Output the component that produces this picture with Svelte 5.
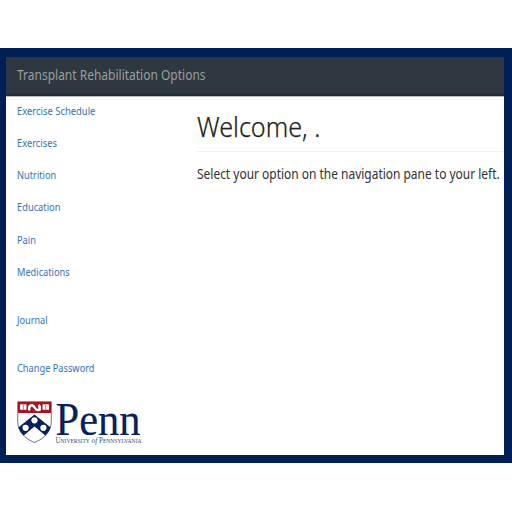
<script>
  const links = [
    { label: 'Exercise Schedule', sx: 0.856 },
    { label: 'Exercises', sx: 0.848 },
    { label: 'Nutrition', sx: 0.84 },
    { label: 'Education', sx: 0.845 },
    { label: 'Pain', sx: 0.84 },
    { label: 'Medications', sx: 0.84 },
    { label: 'Journal', sx: 0.83, gap: true },
    { label: 'Change Password', sx: 0.84, gap: true },
  ];
</script>

<div class="page">
  <div class="frame">
    <header><span class="fit brand">Transplant Rehabilitation Options</span></header>
    <div class="body">
      <aside>
        <nav>
          {#each links as l}
            <a href="#top" class:gap={l.gap}><span class="fit" style="transform: scaleX({l.sx})">{l.label}</span></a>
          {/each}
        </nav>
        <svg class="logo" width="128" height="46" viewBox="0 0 128 46" role="img" aria-label="Penn">
          <path d="M.7.7H34.3V20C34.3 31 27 37.5 17.5 41.6C8 37.5.7 31 .7 20Z" fill="#fff" stroke="#56678f" stroke-width=".9" />
          <path d="M1 1H34V12H1Z" fill="#a41424" />
          <g fill="#fff">
            <path d="M3 3.600q2-.8 3.300 0q1.500-.8 3.200 0V8.800H3ZM25.500 3.600q1.700-.8 3.200 0q1.500-.8 3.300 0V8.800h-6.500Z" />
            <path d="M11 9.500V5.500q1.500-3.300 4.300-2.400q2.700.8 3.500 3.100q1.200 2.400 2.500 1l-.4-2.800l1.500-1.500l1.500 2v4.700l-2 .7q-3.500.2-4.800-2.500q-1.300-2.500-2.800-2.100q-1.300.5-1 3.800Z" />
          </g>
          <path d="M6.300 4V8.500M28.700 4V8.500" stroke="#a41424" stroke-width=".6" />
          <path d="M17.500 13.500L33.700 26.500Q31.500 32 28.300 34.500L17.500 25.500L6.700 34.500Q3.500 32 1.300 26.500Z" fill="#08215a" />
          <circle cx="17.500" cy="19.300" r="3.100" fill="#fff" />
          <circle cx="8.600" cy="26.800" r="3.100" fill="#fff" />
          <circle cx="26.400" cy="26.800" r="3.100" fill="#fff" />
          <text x="38.500" y="34" textLength="85" lengthAdjust="spacingAndGlyphs" class="penn">Penn</text>
          <text x="38.500" y="42" textLength="86" lengthAdjust="spacingAndGlyphs" class="sub">U<tspan class="sc">NIVERSITY</tspan> <tspan class="of">of</tspan> P<tspan class="sc">ENNSYLVANIA</tspan></text>
        </svg>
      </aside>
      <main>
        <h1><span class="fit title">Welcome, .</span></h1>
        <p><span class="fit copy">Select your option on the navigation pane to your left.</span></p>
      </main>
    </div>
  </div>
</div>

<style>
  .page {
    box-sizing: border-box;
    width: 512px;
    height: 512px;
    padding-top: 48px;
    background: #fff;
    overflow: hidden;
    font-family: "Noto Sans", "Open Sans", sans-serif;
  }
  .frame {
    box-sizing: border-box;
    height: 415px;
    border: solid #001f57;
    border-width: 9px 8px 8px 6px;
    background: #fff;
  }
  header {
    box-sizing: border-box;
    height: 40px;
    padding-left: 10.500px;
    line-height: 35px;
    background: linear-gradient(#2e3840 0 37px, #222c34 37px 39px, #b5babd 39px);
  }
  .fit {
    display: inline-block;
    white-space: nowrap;
    transform-origin: 0 50%;
  }
  .brand { font-size: 14.500px; color: #9b9d9e; transform: scaleX(.827); }
  .body { display: flex; height: 358px; }
  aside { width: 180.500px; padding-left: 10.500px; box-sizing: content-box; flex: none; }
  nav { height: 304px; }
  a {
    display: block;
    height: 32.150px;
    line-height: 27px;
    font-size: 11px;
    color: #3272b4;
    text-decoration: none;
  }
  .gap { margin-top: 16px; }
  .logo { display: block; overflow: visible; }
  .penn { font-family: "Liberation Serif", serif; font-size: 46.500px; fill: #08215a; stroke: #08215a; stroke-width: .2; }
  .sub { font-family: "Liberation Serif", serif; font-size: 7.500px; fill: #3c4c78; }
  .sc { font-size: 6px; }
  .of { font-size: 8px; font-style: italic; }
  main { width: 307px; flex: none; }
  h1 {
    margin: 0;
    height: 54px;
    line-height: 55px;
    border-bottom: 1px solid #eee;
    font-weight: 400;
  }
  .title { font-size: 27.500px; color: #222; font-weight: 300; -webkit-text-stroke: .25px #222; transform: scaleX(.915); }
  p { margin: 0; line-height: 43px; }
  .copy { font-size: 14px; color: #303030; transform: scaleX(.854); }
</style>
